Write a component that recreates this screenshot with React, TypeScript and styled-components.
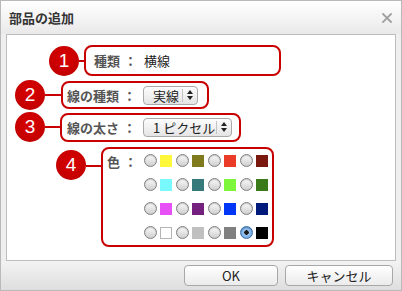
import React from "react";
import styled, { createGlobalStyle } from "styled-components";

const Global = createGlobalStyle`
  html, body { margin: 0; padding: 0; background: #fff; }
  body { font-family: "Noto Sans CJK JP", "Noto Sans", sans-serif; }
  * { box-sizing: border-box; }
`;

const JP = `"Noto Sans CJK JP", "Liberation Sans", sans-serif`;
const RED = "#c80000";

const Dialog = styled.div`
  width: 402px;
  height: 291px;
  border: 1px solid #b9b9b9;
  background: #efefef;
  display: flex;
  flex-direction: column;
`;

const TitleBar = styled.div`
  height: 33px;
  flex: none;
  display: flex;
  align-items: center;
  justify-content: space-between;
  padding: 0 9px 0 8px;
  background: linear-gradient(#ffffff, #e9e9e9);
`;

const Title = styled.div`
  font-family: ${JP};
  font-size: 13px;
  font-weight: 700;
  color: #333;
  line-height: 13px;
`;

const Panel = styled.div`
  flex: none;
  height: 227px;
  margin: 0 5px;
  border: 1px solid #bdbdbd;
  background: #fff;
  padding-top: 10px;
  display: flex;
  flex-direction: column;
`;

const Row = styled.div<{ $left: number; $top: number; $start?: boolean }>`
  display: flex;
  align-items: ${(p) => (p.$start ? "flex-start" : "center")};
  margin-left: ${(p) => p.$left}px;
  margin-top: ${(p) => p.$top}px;
`;

const Badge = styled.div<{ $mt?: number }>`
  width: 30px;
  height: 30px;
  flex: none;
  border-radius: 50%;
  background: radial-gradient(circle at 50% 40%, #d80000 0%, #c40000 70%, #a80000 100%);
  color: #fff;
  font-family: "Liberation Sans", sans-serif;
  font-size: 19px;
  display: flex;
  align-items: center;
  justify-content: center;
  margin-top: ${(p) => p.$mt ?? 0}px;
`;

const Connector = styled.div<{ $w: number; $mt?: number }>`
  width: ${(p) => p.$w}px;
  height: 2px;
  flex: none;
  background: ${RED};
  margin-top: ${(p) => p.$mt ?? 0}px;
`;

const Callout = styled.div<{ $w: number; $h: number; $pl: number; $start?: boolean }>`
  width: ${(p) => p.$w}px;
  height: ${(p) => p.$h}px;
  border: 2px solid ${RED};
  border-radius: 8px;
  display: flex;
  align-items: ${(p) => (p.$start ? "flex-start" : "center")};
  padding-left: ${(p) => p.$pl}px;
  padding-top: ${(p) => (p.$start ? 6 : 0)}px;
`;

const Label = styled.span`
  font-family: ${JP};
  font-size: 13px;
  font-weight: 700;
  color: #555;
  line-height: 13px;
  white-space: nowrap;
`;

const Colon = styled(Label)`
  margin: 0 7px 0 4px;
`;

const Value = styled.span`
  font-family: ${JP};
  font-size: 13px;
  color: #222;
  line-height: 13px;
`;

const Select = styled.div<{ $w: number }>`
  width: ${(p) => p.$w}px;
  height: 19px;
  border: 1px solid #a9a9a9;
  border-radius: 4px;
  background: linear-gradient(#fdfdfd, #e4e4e4);
  display: flex;
  align-items: stretch;
  font-family: ${JP};
  font-size: 13px;
  color: #222;
`;

const SelectText = styled.div`
  flex: 1;
  padding-left: 9px;
  display: flex;
  align-items: center;
  white-space: pre;
  line-height: 13px;
`;

const SelectArrow = styled.div`
  width: 15px;
  flex: none;
  border-left: 1px solid #c4c4c4;
  margin: 2px 0;
  display: flex;
  align-items: center;
  justify-content: center;
`;

const Grid = styled.div`
  display: grid;
  grid-template-columns: repeat(4, auto);
  column-gap: 4px;
  row-gap: 11px;
  margin-top: -1px;
`;

const Cell = styled.div`
  display: flex;
  align-items: center;
  gap: 3px;
`;

const Radio = styled.div<{ $on?: boolean }>`
  width: 13px;
  height: 13px;
  border-radius: 50%;
  border: 1px solid ${(p) => (p.$on ? "#3b6ea8" : "#7f7f7f")};
  background: ${(p) =>
    p.$on
      ? "radial-gradient(circle at 50% 50%, #1a1a1a 0 2px, #9cc7f2 2.5px, #4f8fd6 100%)"
      : "linear-gradient(#fafafa, #cfcfcf)"};
  box-shadow: inset 0 1px 1px rgba(0, 0, 0, 0.2);
`;

const Swatch = styled.div<{ $c: string }>`
  width: 12px;
  height: 12px;
  background: ${(p) => p.$c};
  border: ${(p) => (p.$c === "#ffffff" ? "1px solid #b5b5b5" : "none")};
`;

const Footer = styled.div`
  flex: 1;
  display: flex;
  justify-content: flex-end;
  gap: 7px;
  padding: 4px 8px 0 0;
  background: linear-gradient(#f3f3f3, #dedede);
`;

const Button = styled.div<{ $w: number }>`
  width: ${(p) => p.$w}px;
  height: 21px;
  border: 1px solid #a8a8a8;
  border-radius: 4px;
  background: linear-gradient(#ffffff, #ebebeb);
  display: flex;
  align-items: center;
  justify-content: center;
  font-family: ${JP};
  font-size: 13px;
  color: #222;
  line-height: 13px;
`;

const colors = [
  "#fff73a", "#7f7a1c", "#ea3a28", "#7a170e",
  "#78f9fd", "#35797a", "#7ef63c", "#3b7a1b",
  "#e650f5", "#73207e", "#0037f6", "#001a7c",
  "#ffffff", "#c0c0c0", "#808080", "#000000",
];

const Arrows = () => (
  <svg width="6" height="10" viewBox="0 0 6 10">
    <path d="M3 0 L6 4 L0 4 Z" fill="#222" />
    <path d="M3 10 L6 6 L0 6 Z" fill="#222" />
  </svg>
);

const CloseIcon = () => (
  <svg width="10" height="10" viewBox="0 0 10 10">
    <path d="M1 1 L9 9 M9 1 L1 9" stroke="#a0a0a0" strokeWidth="1.8" strokeLinecap="square" />
  </svg>
);

export default function App() {
  return (
    <>
      <Global />
      <Dialog>
        <TitleBar>
          <Title>部品の追加</Title>
          <CloseIcon />
        </TitleBar>
        <Panel>
          <Row $left={42} $top={0}>
            <Badge>1</Badge>
            <Connector $w={5} />
            <Callout $w={197} $h={31} $pl={8}>
              <Label>種類</Label>
              <Colon>：</Colon>
              <Value>横線</Value>
            </Callout>
          </Row>
          <Row $left={8} $top={4}>
            <Badge>2</Badge>
            <Connector $w={16} />
            <Callout $w={148} $h={28} $pl={4}>
              <Label>線の種類</Label>
              <Colon>：</Colon>
              <Select $w={55}>
                <SelectText>実線</SelectText>
                <SelectArrow>
                  <Arrows />
                </SelectArrow>
              </Select>
            </Callout>
          </Row>
          <Row $left={8} $top={2}>
            <Badge>3</Badge>
            <Connector $w={15} />
            <Callout $w={181} $h={29} $pl={5}>
              <Label>線の太さ</Label>
              <Colon>：</Colon>
              <Select $w={89}>
                <SelectText>1 ピクセル</SelectText>
                <SelectArrow>
                  <Arrows />
                </SelectArrow>
              </Select>
            </Callout>
          </Row>
          <Row $left={49} $top={5} $start>
            <Badge $mt={3}>4</Badge>
            <Connector $w={15} $mt={18} />
            <Callout $w={173} $h={100} $pl={4} $start>
              <Label>色</Label>
              <Colon>：</Colon>
              <Grid>
                {colors.map((c, i) => (
                  <Cell key={i}>
                    <Radio $on={i === 15} />
                    <Swatch $c={c} />
                  </Cell>
                ))}
              </Grid>
            </Callout>
          </Row>
        </Panel>
        <Footer>
          <Button $w={94}>OK</Button>
          <Button $w={108}>キャンセル</Button>
        </Footer>
      </Dialog>
    </>
  );
}
